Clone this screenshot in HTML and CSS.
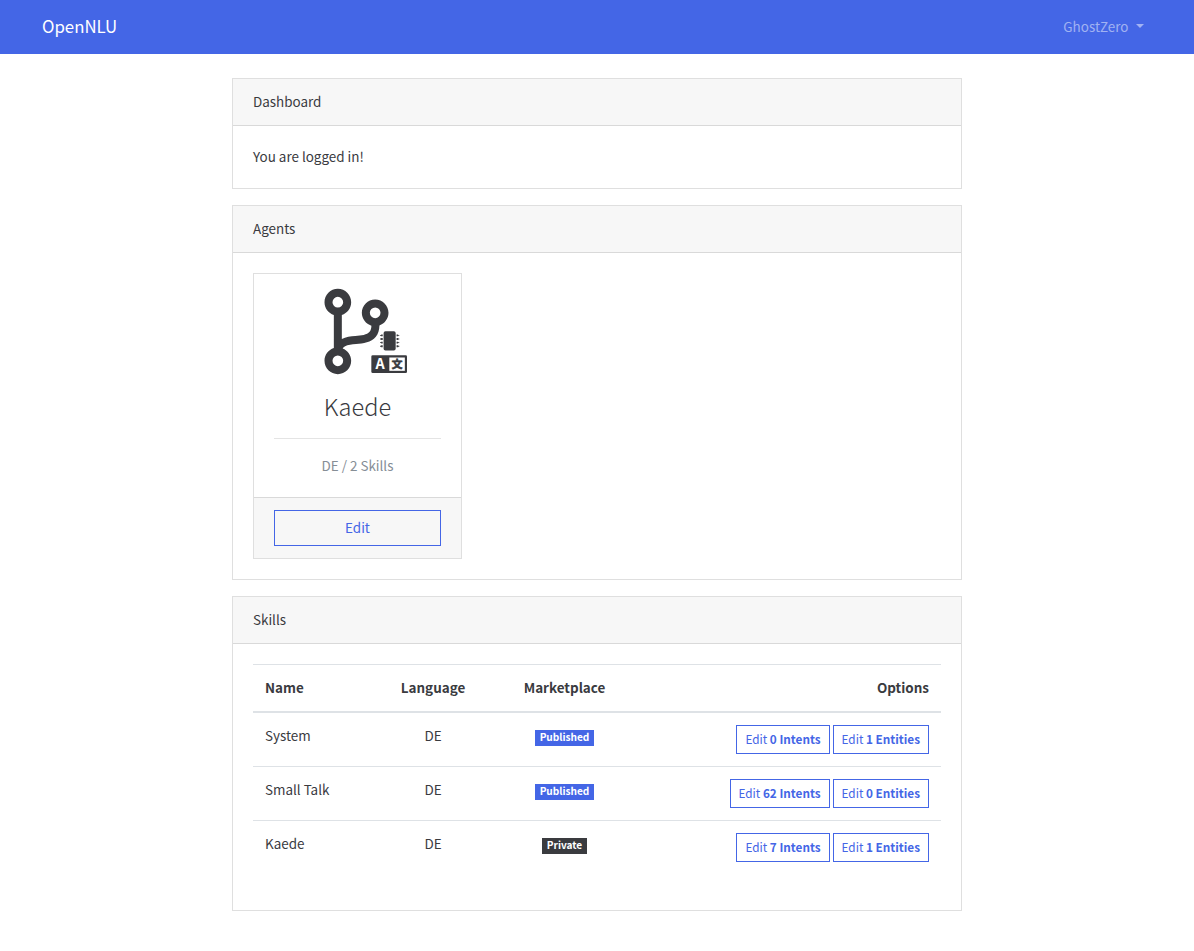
FILE: index.html
```html
<!DOCTYPE html>
<html lang="en">
<head>
<meta charset="utf-8">
<title>OpenNLU</title>
<link rel="stylesheet" href="styles.css">
</head>
<body>
<nav class="navbar">
  <a class="brand">OpenNLU</a>
  <a class="user">GhostZero<span class="caret"></span></a>
</nav>
<main class="container">
  <section class="card">
    <header class="card-header">Dashboard</header>
    <div class="card-body message">You are logged in!</div>
  </section>

  <section class="card">
    <header class="card-header">Agents</header>
    <div class="card-body">
      <article class="card agent">
        <div class="agent-body">
          <svg class="agent-icon" viewBox="-3 1 498 510" aria-hidden="true">
            <path fill-rule="evenodd" d="M384 144c0-44.2-35.8-80-80-80s-80 35.8-80 80c0 36.4 24.3 67.1 57.5 76.8-.6 16.1-4.2 28.5-11 36.9-15.4 19.2-49.3 22.4-85.2 25.7-28.2 2.6-57.4 5.4-81.3 16.9v-144c32.5-10.2 56-40.5 56-76.3 0-44.2-35.8-80-80-80S0 35.800 0 80c0 35.800 23.500 66.100 56 76.300v199.300C23.500 365.900 0 396.200 0 432c0 44.200 35.800 80 80 80s80-35.800 80-80c0-34-21.200-63.100-51.200-74.600 3.100-5.200 7.800-9.800 14.900-13.400 16.200-8.200 40.400-10.400 66.100-12.800 42.200-3.900 90-8.400 118.200-43.400 14-17.400 21.100-39.800 21.600-67.900 31.600-10.800 54.400-40.700 54.400-75.900zM80 48a32 32 0 1 1 0 64 32 32 0 0 1 0-64zM80 400a32 32 0 1 1 0 64 32 32 0 0 1 0-64zM304 112a32 32 0 1 1 0 64 32 32 0 0 1 0-64z"/>
            <g transform="translate(333 254) scale(.226)">
              <rect x="96" width="320" height="512" rx="48"/>
              <path d="M72 88v48H30v-12H0v-24h30V88zm0 96v48H30v-12H0v-24h30v-12zm0 96v48H30v-12H0v-24h30v-12zm0 96v48H30v-12H0v-24h30v-12zM440 88v48h42v-12h30v-24h-30V88zm0 96v48h42v-12h30v-24h-30v-12zm0 96v48h42v-12h30v-24h-30v-12zm0 96v48h42v-12h30v-24h-30v-12z"/>
            </g>
            <rect x="281" y="399" width="214" height="106" rx="8"/>
            <rect class="paper" x="389" y="412" width="93" height="80"/>
            <text class="latin" x="334" y="484">A</text>
            <text class="han" x="435" y="474">文</text>
          </svg>
          <h2 class="agent-name">Kaede</h2>
          <hr class="rule">
          <p class="agent-meta">DE / 2 Skills</p>
        </div>
        <footer class="agent-footer"><a class="btn">Edit</a></footer>
      </article>
    </div>
  </section>

  <section class="card">
    <header class="card-header">Skills</header>
    <div class="card-body">
      <table class="table">
        <colgroup><col class="c-name"><col class="c-lang"><col class="c-market"><col></colgroup>
        <thead>
          <tr><th>Name</th><th class="center">Language</th><th class="center">Marketplace</th><th class="right">Options</th></tr>
        </thead>
        <tbody>
          <tr>
            <td>System</td><td class="center">DE</td>
            <td class="center"><span class="badge">Published</span></td>
            <td class="actions"><div class="options"><a class="btn btn-sm">Edit <b>0 Intents</b></a><a class="btn btn-sm">Edit <b>1 Entities</b></a></div></td>
          </tr>
          <tr>
            <td>Small Talk</td><td class="center">DE</td>
            <td class="center"><span class="badge">Published</span></td>
            <td class="actions"><div class="options"><a class="btn btn-sm">Edit <b>62 Intents</b></a><a class="btn btn-sm">Edit <b>0 Entities</b></a></div></td>
          </tr>
          <tr>
            <td>Kaede</td><td class="center">DE</td>
            <td class="center"><span class="badge dark">Private</span></td>
            <td class="actions"><div class="options"><a class="btn btn-sm">Edit <b>7 Intents</b></a><a class="btn btn-sm">Edit <b>1 Entities</b></a></div></td>
          </tr>
        </tbody>
      </table>
    </div>
  </section>
</main>
</body>
</html>
```
FILE: styles.css
```css
* { box-sizing: border-box; }

body {
  margin: 0;
  background: #fff;
  color: #3a3b3f;
  font: 13.44px/22px "Source Sans Pro", "Noto Sans CJK JP", sans-serif;
}

.navbar {
  display: flex;
  justify-content: space-between;
  align-items: center;
  height: 54px;
  padding: 0 50px 2px 42px;
  background: #4466e6;
}
.brand { color: #fff; font-size: 16.8px; }
.user { display: flex; align-items: center; color: rgba(255, 255, 255, .5); }
.caret {
  margin-left: 7.6px;
  border: 4px solid transparent;
  border-top-color: currentColor;
  border-bottom: 0;
}

.container { width: 730px; margin: 24px auto 0; }
.card { margin-bottom: 16px; border: 1px solid #dfdfdf; background: #fff; }
.card-header { padding: 11px 20px 13px; border-bottom: 1px solid #d9d9d9; background: #f7f7f7; }
.card-body { padding: 20px; }
.card-body.message { padding: 19px 20px 21px; }

.agent { width: 209px; margin: 0; text-align: center; }
.agent-body { height: 223px; padding: 15px 20px 20px; }
.agent-icon { display: block; width: 83px; height: 85px; margin-left: 50px; fill: #3a3b3f; overflow: visible; }
.agent-icon .paper { fill: #fff; }
.agent-icon text { font-weight: 700; text-anchor: middle; }
.agent-icon .latin { fill: #fff; font-size: 86px; }
.agent-icon .han { font-size: 64px; stroke: #3a3b3f; stroke-width: 4px; }
.agent-name { margin: 17px 0 17px; font-size: 23.6px; font-weight: 300; line-height: 30px; }
.rule { margin: 0 0 15px; border: 0; border-top: 1px solid #e4e4e4; }
.agent-meta { margin: 0; color: #868e96; }
.agent-footer { padding: 12px 20px; border-top: 1px solid #d9d9d9; background: #f7f7f7; }

.btn {
  display: block;
  padding: 5px 12px 7px;
  border: 1px solid #4466e6;
  color: #4466e6;
}
.btn-sm { padding: 3px 8px 5px; font-size: 11.76px; line-height: 19px; white-space: nowrap; }

.table { width: 100%; margin-bottom: 16px; border-spacing: 0; table-layout: fixed; }
.c-name { width: 118px; }
.c-lang { width: 124px; }
.c-market { width: 139px; }
.table th, .table td { padding: 11px 12px 13px; text-align: left; vertical-align: top; }
.table th { border-top: 1px solid #dee2e6; border-bottom: 2px solid #dee2e6; }
.table td { height: 53px; }
.table tr + tr td { height: 54px; border-top: 1px solid #dee2e6; }
.table td.actions { padding: 12px; }
.table .center { text-align: center; }
.table .right { text-align: right; }
.options { display: flex; justify-content: flex-end; gap: 3px; }

.badge {
  display: inline-block;
  padding: 0 5px 2px;
  background: #4466e6;
  color: #fff;
  font-size: 10.1px;
  font-weight: 700;
  line-height: 14px;
}
.badge.dark { background: #3a3b3f; }
```
